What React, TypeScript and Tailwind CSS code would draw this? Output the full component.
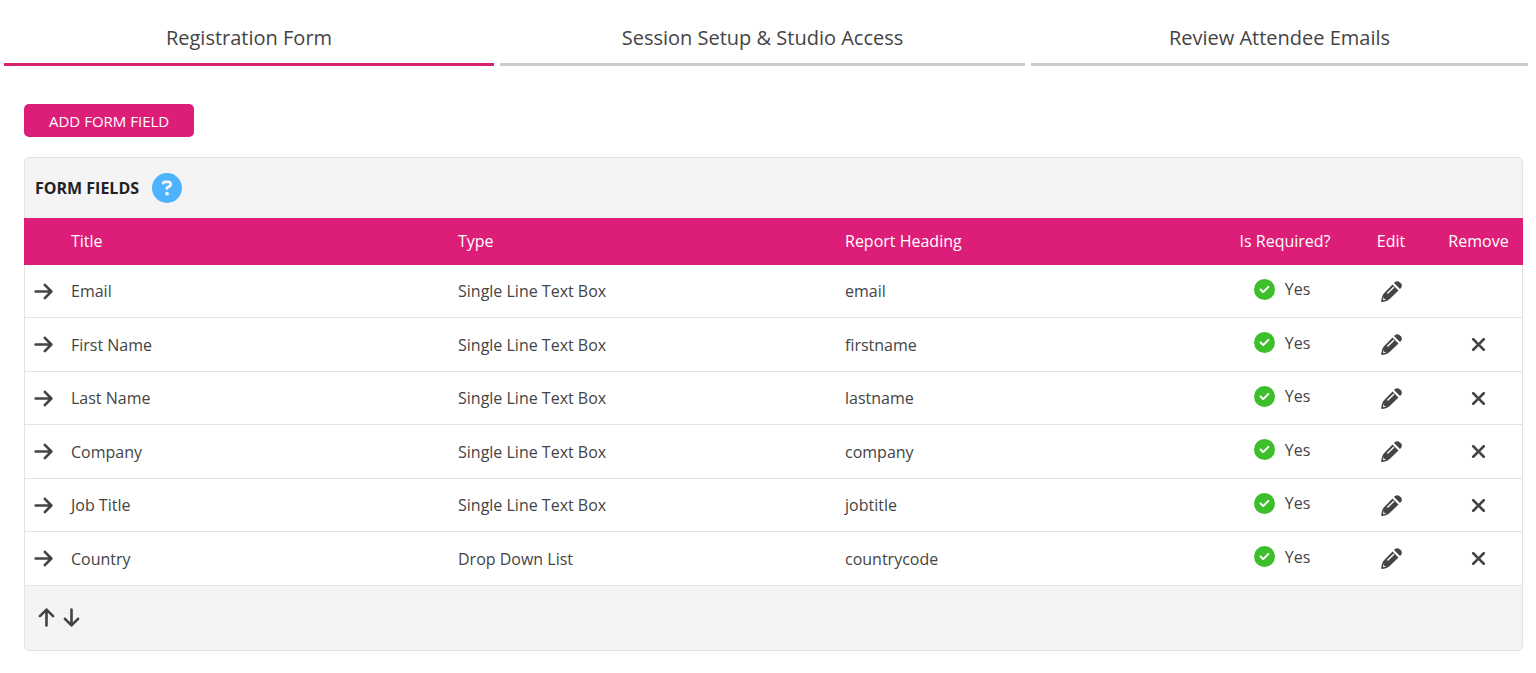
import {
  FaArrowDown,
  FaArrowRight,
  FaArrowUp,
  FaCircleCheck,
  FaCircleQuestion,
  FaXmark,
} from "react-icons/fa6";
import { useState } from "react";

type FormField = {
  title: string;
  type: string;
  heading: string;
  locked?: boolean;
};

const initialFields: FormField[] = [
  { title: "Email", type: "Single Line Text Box", heading: "email", locked: true },
  { title: "First Name", type: "Single Line Text Box", heading: "firstname" },
  { title: "Last Name", type: "Single Line Text Box", heading: "lastname" },
  { title: "Company", type: "Single Line Text Box", heading: "company" },
  { title: "Job Title", type: "Single Line Text Box", heading: "jobtitle" },
  { title: "Country", type: "Drop Down List", heading: "countrycode" },
];

const tabs = [
  "Registration Form",
  "Session Setup & Studio Access",
  "Review Attendee Emails",
];

const PencilIcon = () => (
  <svg width={21} height={21} viewBox="0 0 63 63" fill="currentColor">
    {/* eraser */}
    <path d="M39 6L43 2.5Q49.5 -2 56 3.5L59.5 7Q65 13.5 60.5 20L57 24Z" />
    {/* body */}
    <path d="M34.5 10.5L52.5 28.5L26 54Q21 58.5 15 60.5L4 63Q0 63.5 0.5 59.5L3 48.5Q4.5 41 9 36.500Z" />
    <path d="M20.5 36L37.5 19.5" stroke="#fff" strokeWidth={4.5} strokeLinecap="round" />
    <path d="M8 47L9.500 53.500L16 55.500L6 58Z" fill="#fff" />
  </svg>
);

const Tabs = () => {
  const [activeTab, setActiveTab] = useState(tabs[0]);

  return (
    <nav className="grid grid-cols-[490fr_525fr_497fr] gap-[6px] pl-1 pr-2 pt-3">
      {tabs.map((tab) => (
        <button
          key={tab}
          onClick={() => setActiveTab(tab)}
          className={`border-b-[3px] pb-3 pt-3 text-[20px] leading-[27px] ${
            tab === activeTab ? "border-[#d6216f]" : "border-[#cbcbcb]"
          }`}
        >
          {tab}
        </button>
      ))}
    </nav>
  );
};

const FieldRow = ({
  field,
  onRemove,
}: {
  field: FormField;
  onRemove: () => void;
}) => {
  return (
    <tr className="h-[53px] even:h-[54px] *:border-b *:border-[#e3e3e3]">
      <td className="border-l pl-2">
        <button aria-label="Select row" className="block">
          <FaArrowRight size={21} />
        </button>
      </td>
      <td className="px-[10px]">{field.title}</td>
      <td className="px-[10px]">{field.type}</td>
      <td className="px-[10px]">{field.heading}</td>
      <td className="pb-1">
        <div className="flex items-center justify-center gap-[10px] pr-[6px]">
          <FaCircleCheck size={21} className="text-[#3dbf2b]" />
          Yes
        </div>
      </td>
      <td>
        <button aria-label="Edit" className="mx-auto block">
          <PencilIcon />
        </button>
      </td>
      <td className="border-r">
        {!field.locked && (
          <button aria-label="Remove" onClick={onRemove} className="mx-auto block">
            <FaXmark size={21} />
          </button>
        )}
      </td>
    </tr>
  );
};

const App = () => {
  const [fields, setFields] = useState(initialFields);

  return (
    <div className="font-['Open_Sans',sans-serif] text-base text-[#444]">
      <Tabs />

      <main className="pb-5 pl-6 pr-[13px] pt-[38px]">
        <button className="block h-[33px] rounded-[5px] bg-[#dd1e78] px-[25px] pt-px text-[15px] text-white">
          ADD FORM FIELD
        </button>

        <section className="mt-5">
          <header className="flex h-[61px] items-center gap-[13px] rounded-t-[5px] border border-b-0 border-[#e3e3e3] bg-[#f4f4f4] pl-[10px]">
            <h2 className="font-bold text-[#222]">FORM FIELDS</h2>
            <button aria-label="Help">
              <FaCircleQuestion size={30} className="text-[#4db3ff]" />
            </button>
          </header>

          <table className="w-full table-fixed border-separate border-spacing-0">
            <colgroup>
              <col className="w-[37px]" />
              <col />
              <col />
              <col />
              <col className="w-[126px]" />
              <col className="w-[86px]" />
              <col className="w-[89px]" />
            </colgroup>
            <thead>
              <tr className="h-[47px] bg-[#dd1e78] text-white *:pb-[2px] *:font-normal">
                <th></th>
                <th className="px-[10px] text-left">Title</th>
                <th className="px-[10px] text-left">Type</th>
                <th className="px-[10px] text-left">Report Heading</th>
                <th>Is Required?</th>
                <th>Edit</th>
                <th>Remove</th>
              </tr>
            </thead>
            <tbody>
              {fields.map((field) => (
                <FieldRow
                  key={field.heading}
                  field={field}
                  onRemove={() => setFields(fields.filter((f) => f !== field))}
                />
              ))}
            </tbody>
          </table>

          <footer className="flex h-[65px] items-center gap-1 rounded-b-[5px] border border-t-0 border-[#e3e3e3] bg-[#f4f4f4] pb-[2px] pl-[11px]">
            <button aria-label="Move up">
              <FaArrowUp size={21} />
            </button>
            <button aria-label="Move down">
              <FaArrowDown size={21} />
            </button>
          </footer>
        </section>
      </main>
    </div>
  );
};

export default App;
